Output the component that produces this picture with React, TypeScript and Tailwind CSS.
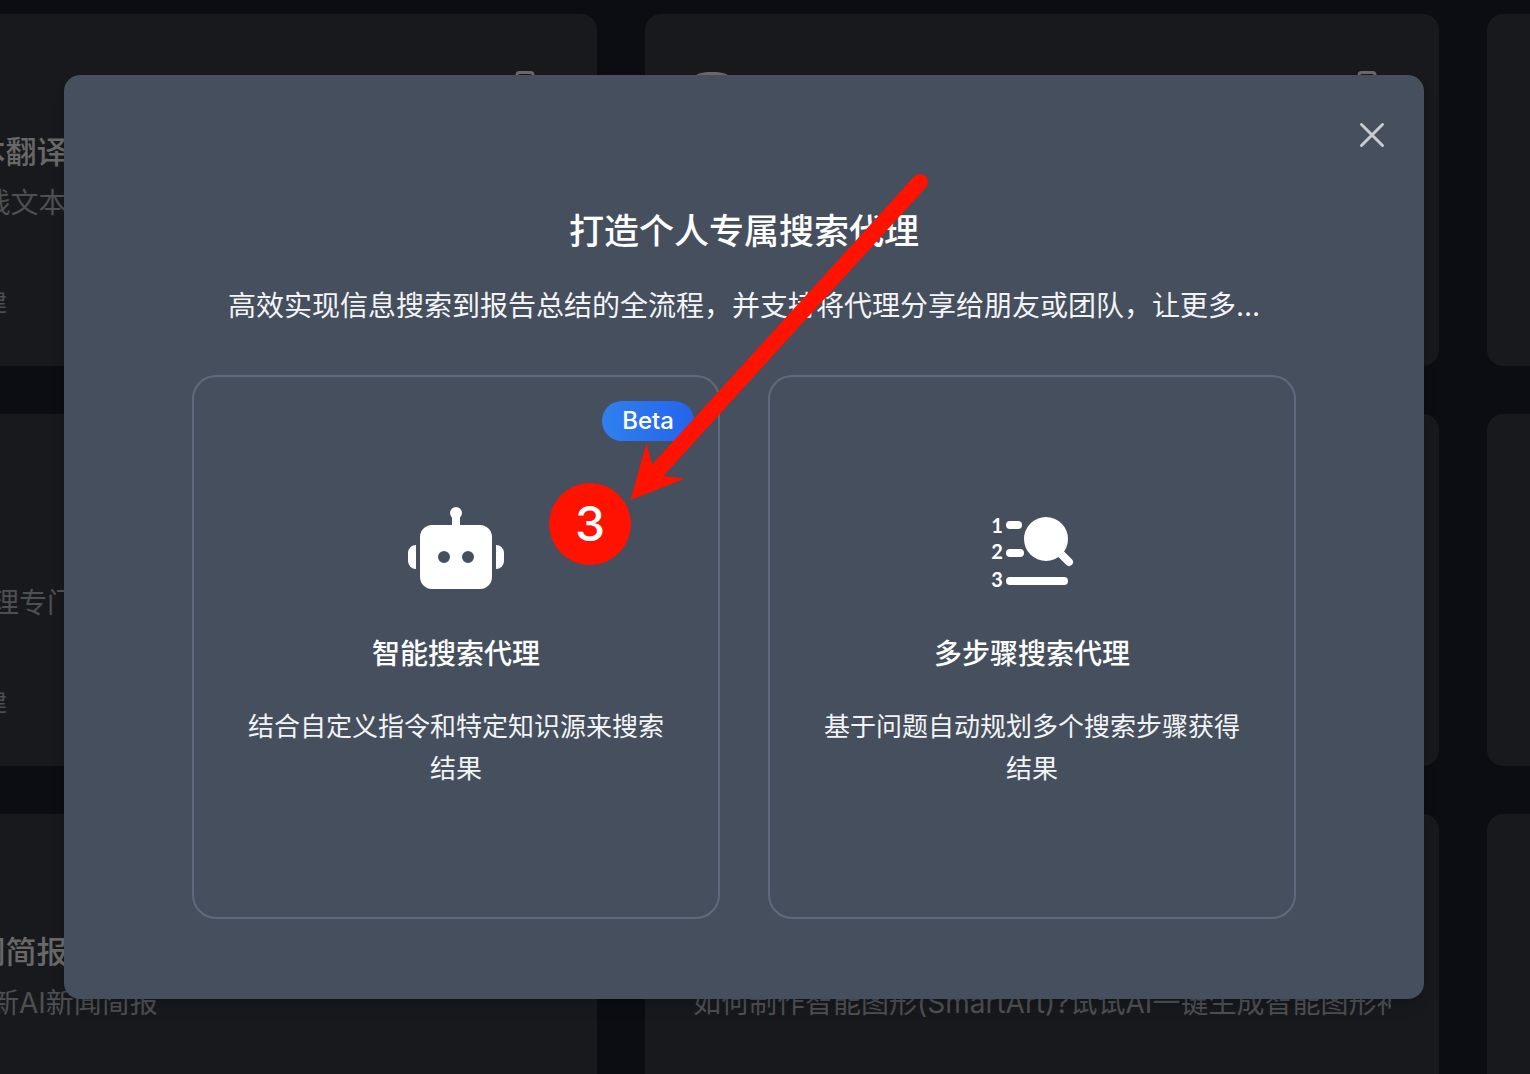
import React from "react";

interface Agent {
  title: string;
  desc: string;
}

const agents: Agent[] = [
  { title: "AI在线文本翻译", desc: "免费 AI-在线文本翻译" },
  { title: "思维导图", desc: "一键生成思维导图" },
  { title: "数据分析", desc: "快速分析你的数据" },
  { title: "论文", desc: "这个搜索代理专门用于论文" },
  { title: "旅行规划", desc: "为你规划下一次旅行" },
  { title: "菜谱", desc: "根据食材推荐菜谱" },
  { title: "AI每日新闻简报", desc: "每天为您更新AI新闻简报" },
  { title: "智能图形", desc: "如何制作智能图形(SmartArt)?试试AI一键生成智能图形神器" },
  { title: "周报", desc: "自动整理一周工作" },
];

function DatabaseIcon() {
  return (
    <svg viewBox="0 0 36 48" className="h-12 w-9" fill="currentColor">
      <path d="M3 14c0-2 6-4 16-4s16 2 16 4v20c0 3-7 5-16 5S3 37 3 34z" />
    </svg>
  );
}

function TrashIcon() {
  return (
    <svg
      viewBox="0 0 48 48"
      className="size-12"
      fill="none"
      stroke="currentColor"
      strokeWidth="3"
      strokeLinecap="round"
      strokeLinejoin="round"
    >
      <path d="M16 17v-4a2.500 2.500 0 0 1 2.500-2.500h11a2.500 2.500 0 0 1 2.500 2.500v4" />
      <path d="M9 17h30M13 17l2 22h18l2-22" />
    </svg>
  );
}

function RobotIcon() {
  return (
    <svg viewBox="0 0 96 96" className="size-24" fill="currentColor">
      <circle cx="48" cy="12" r="6" />
      <rect x="44" y="12" width="8" height="14" />
      <path
        fillRule="evenodd"
        d="M24 24h48a12 12 0 0 1 12 12v40a12 12 0 0 1-12 12H24a12 12 0 0 1-12-12V36a12 12 0 0 1 12-12zM30 56a6 6 0 1 0 12 0a6 6 0 1 0-12 0zM54 56a6 6 0 1 0 12 0a6 6 0 1 0-12 0z"
      />
      <path d="M8 44v24a8 8 0 0 1-8-8v-8a8 8 0 0 1 8-8zM88 44v24a8 8 0 0 0 8-8v-8a8 8 0 0 0-8-8z" />
    </svg>
  );
}

function StepsIcon() {
  return (
    <svg viewBox="0 0 96 96" className="size-24" fill="currentColor">
      <g className="font-['Lato'] text-[20px] font-bold" textAnchor="middle">
        <text x="13" y="32">1</text>
        <text x="13" y="58">2</text>
        <text x="13" y="86">3</text>
      </g>
      <rect x="22" y="20" width="16" height="8" rx="4" />
      <rect x="22" y="48" width="18" height="8" rx="4" />
      <rect x="22" y="76" width="62" height="8" rx="4" />
      <circle cx="62" cy="38" r="22" />
      <path d="M74 50l11 11" stroke="currentColor" strokeWidth="8" strokeLinecap="round" />
    </svg>
  );
}

function AgentCard({ title, desc }: Agent) {
  return (
    <article className="h-88 overflow-hidden rounded-2xl bg-[#18191c] p-12 text-[#4e4f52]">
      <div className="flex justify-between text-[#686868]">
        <DatabaseIcon />
        <TrashIcon />
      </div>
      <h2 className="mt-[22px] text-[31px] leading-10 font-medium text-[#686868]">{title}</h2>
      <p className="mt-[11px] overflow-hidden text-[28px] leading-10 whitespace-nowrap">{desc}</p>
      <div className="mt-16 flex items-center gap-3 text-2xl">
        <span className="size-6 rounded-full bg-[#3a3b3e]" />
        由官方创建
      </div>
    </article>
  );
}

interface OptionProps {
  icon: React.ReactNode;
  title: string;
  desc: string;
  badge?: string;
}

function Option({ icon, title, desc, badge }: OptionProps) {
  return (
    <button
      type="button"
      className="relative flex min-h-[544px] flex-1 flex-col items-center justify-center rounded-3xl border-2 border-[#5f6a7e] px-12 pb-[3px] text-white"
    >
      {badge && (
        <span className="absolute top-6 right-6 rounded-full bg-linear-to-r from-[#3080ee] to-[#2563eb] px-5 text-2xl leading-10 font-medium">
          {badge}
        </span>
      )}
      {icon}
      <span className="mt-[37px] text-[28px] leading-10 font-medium">{title}</span>
      <span className="mt-8 text-[26px] leading-[42px] text-gray-100">{desc}</span>
    </button>
  );
}

export default function App() {
  return (
    <div
      lang="zh-CN"
      className="relative h-screen overflow-hidden bg-[#0c0d12] font-['Inter','Noto_Sans_CJK_SC',sans-serif]"
    >
      <main className="-ml-[197px] grid grid-cols-[repeat(3,794px)] gap-12 pt-3.5">
        {agents.map((agent) => (
          <AgentCard key={agent.title} {...agent} />
        ))}
      </main>

      <div className="absolute inset-0 flex items-center justify-center pr-[42px]">
        <div
          role="dialog"
          aria-labelledby="dialog-title"
          className="relative w-full max-w-[1360px] rounded-2xl bg-[#464f5d] px-32 pt-33 pb-20 text-white shadow-lg"
        >
          <button type="button" aria-label="关闭" className="absolute top-10 right-8 size-10 text-[#c9cbd1]">
            <svg viewBox="0 0 40 40" fill="none" stroke="currentColor" strokeWidth="3" strokeLinecap="round">
              <path d="M9.500 9.500l21 21M30.500 9.500l-21 21" />
            </svg>
          </button>

          <h1 id="dialog-title" className="text-center text-[35px] leading-12 font-medium">
            打造个人专属搜索代理
          </h1>
          <p className="mt-7 text-center text-[28px] leading-[46px] whitespace-nowrap text-gray-100">
            高效实现信息搜索到报告总结的全流程，并支持将代理分享给朋友或团队，让更多...
          </p>

          <div className="mt-[46px] flex gap-12">
            <Option
              icon={<RobotIcon />}
              title="智能搜索代理"
              desc="结合自定义指令和特定知识源来搜索结果"
              badge="Beta"
            />
            <Option icon={<StepsIcon />} title="多步骤搜索代理" desc="基于问题自动规划多个搜索步骤获得结果" />
          </div>

          {/* step marker and arrow */}
          <svg
            viewBox="0 0 312 336"
            className="pointer-events-none absolute top-[95px] left-[560px] h-[336px] w-[312px] text-[#ff1200]"
          >
            <path d="M34 300L296 12" stroke="currentColor" strokeWidth="16" strokeLinecap="round" />
            <path d="M6.500 330L22.500 273L28 294L40 306L61 308.500z" fill="currentColor" />
          </svg>
          <span className="pointer-events-none absolute top-[408px] left-[485px] flex size-[82px] items-center justify-center rounded-full bg-[#ff1200] text-5xl font-medium">
            3
          </span>
        </div>
      </div>
    </div>
  );
}
